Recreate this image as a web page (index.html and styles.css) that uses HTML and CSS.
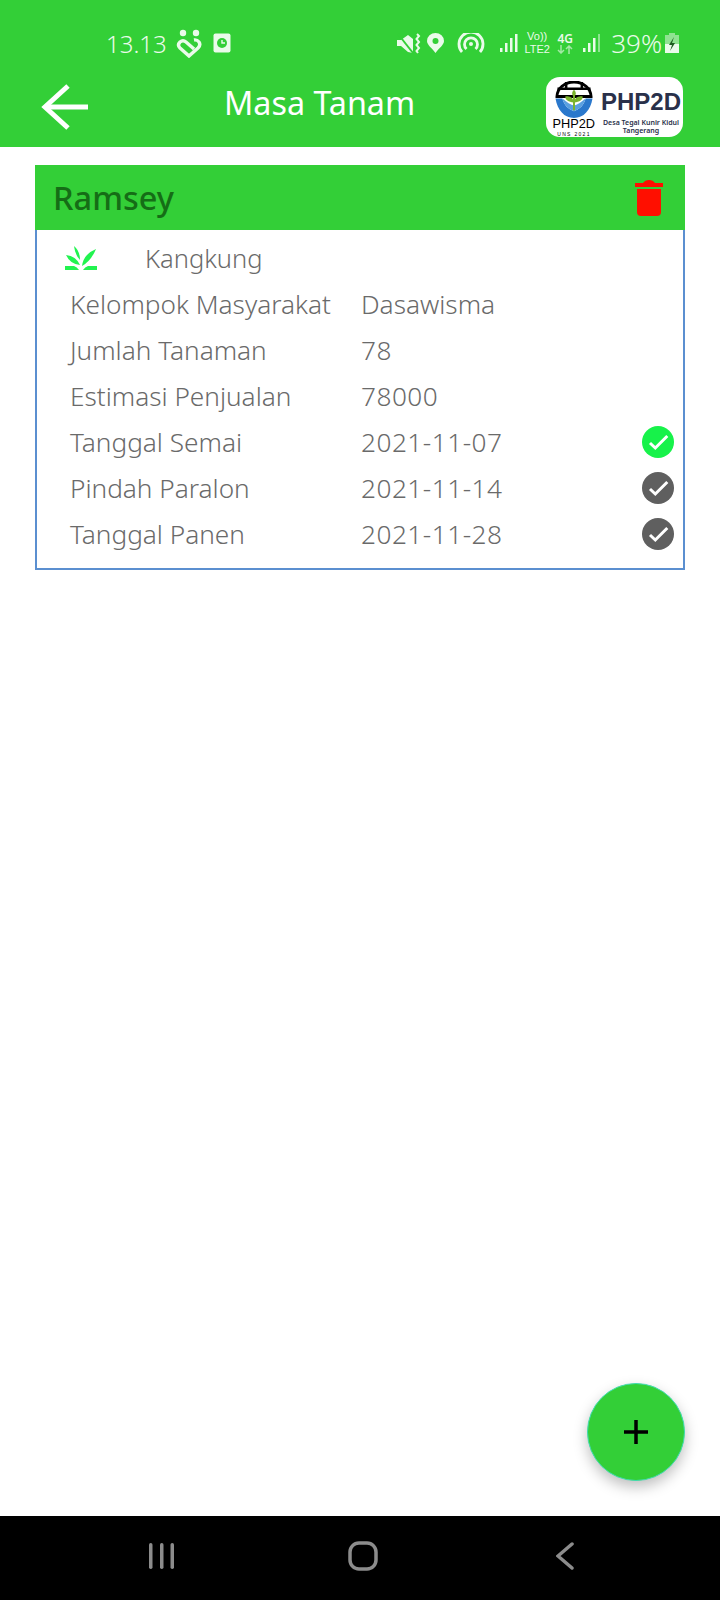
FILE: index.html

```html
<!DOCTYPE html>
<html lang="id">
<head>
  <meta charset="UTF-8" />
  <meta name="viewport" content="width=device-width, initial-scale=1.0"/>
  <title>Masa Tanam</title>
  <link rel="stylesheet" href="styles.css">
</head>
<body>

  <div class="screen">
    <div class="status-bar">
      <span class="clock">13.13</span>
      <svg class="st-people" width="28" height="30" viewBox="0 0 28 30">
        <circle cx="8" cy="5" r="3.200" fill="#eafbea"/><circle cx="21" cy="5" r="3.200" fill="#eafbea"/>
        <g fill="none" stroke="#eafbea" stroke-width="3.400">
          <path d="M19 21 11 14Q8 11.500 5 14Q2 17 5 20L14 28 23 20Q26 17 24 14Q22 11.500 19 12"/>
        </g>
      </svg>
      <svg class="st-clockapp" width="18" height="20" viewBox="0 0 18 20">
        <rect x="0.500" y="0.500" width="17" height="19" rx="2" fill="#eafbea"/>
        <circle cx="9" cy="10" r="5" fill="#33cf37"/>
        <path d="M9 7v3h3" fill="none" stroke="#eafbea" stroke-width="1.400"/>
      </svg>

      <div class="status-right">
        <svg class="st-mute" width="24" height="21" viewBox="0 0 24 21" fill="#eafbea">
          <path d="M0 7h4L11 2 16 6V20L11 19 4 13H0Z"/><path d="M1 1 16 20" stroke="#33cf37" stroke-width="2"/>
          <path d="M20 1 22 3 19.500 6 22 9 19.500 12 22 15 19.500 18 21 20" fill="none" stroke="#eafbea" stroke-width="2"/>
        </svg>
        <svg class="st-pin" width="17" height="20" viewBox="0 0 17 20">
          <path d="M8.500 20 C5 15 0 12 0 8 A8.500 8 0 0 1 17 8 C17 12 12 15 8.500 20Z" fill="#eafbea"/>
          <circle cx="8.500" cy="8" r="3" fill="#33cf37"/>
        </svg>
        <svg class="st-hotspot" width="28" height="20" viewBox="0 0 28 20" fill="none" stroke="#eafbea" stroke-width="2.800">
          <path d="M5 19A12 12 0 1 1 23 19"/><path d="M9.500 16A6.500 6.500 0 1 1 18.500 16"/>
          <circle cx="14" cy="11" r="2" fill="#eafbea" stroke="none"/>
        </svg>
        <svg class="st-signal" width="19" height="18" viewBox="0 0 19 18" fill="#eafbea">
          <rect x="0" y="14" width="2.500" height="4"/><rect x="5" y="9" width="2.500" height="9"/><rect x="10" y="4" width="2.500" height="14"/><rect x="15" y="0" width="2.500" height="18"/>
        </svg>
        <div class="st-lte"><span>Vo))</span><span>LTE2</span></div>
        <div class="st-4g">
          <span>4G</span>
          <svg width="16" height="9" viewBox="0 0 16 9" fill="none" stroke="#a4e9a6" stroke-width="1.500">
            <path d="M4 0V8M1 5 4 8 7 5"/><path d="M12 9V1M9 4 12 1 15 4"/>
          </svg>
        </div>
        <svg class="st-signal2" width="19" height="18" viewBox="0 0 19 18" fill="#eafbea">
          <rect x="0" y="14" width="2.500" height="4"/><rect x="5" y="9" width="2.500" height="9"/><rect x="10" y="4" width="2.500" height="14"/><rect x="15" y="0" width="2" height="18" opacity="0.5"/>
        </svg>
        <span class="st-batt">39%</span>
        <svg class="st-battery" width="14" height="20" viewBox="0 0 14 20">
          <path d="M4 0h6v2h4v18H0V2h4Z" fill="#8fe391"/>
          <rect x="0" y="11" width="14" height="9" fill="#eafbea"/>
          <path d="M9 4 4 12h3l-2 6 5-8H7Z" fill="#1d5c1f"/>
        </svg>
      </div>
    </div>

    <div class="app-bar">
      <svg class="back-arrow" width="48" height="46" viewBox="0 0 48 46" fill="none" stroke="#fff" stroke-width="5">
        <path d="M47 23H4"/><path d="M27 2 4 23 27 44"/>
      </svg>
      <h1>Masa Tanam</h1>
      <div class="logo">
        <div class="logo-mark">
          <svg width="38" height="37" viewBox="0 0 38 38">
            <path d="M1.500 16A17.500 15 0 0 1 36.500 16Z" fill="#fff" stroke="#000" stroke-width="3"/>
            <path d="M2 8H36M11 1V8M27 1V8" stroke="#000" stroke-width="2.500" fill="none"/>
            <path d="M0 18C2 30 9 38 19 38S36 30 38 18H31C29 25 25 29 19 31C13 29 9 25 7 18Z" fill="#2a78cc"/>
            <path d="M7 18C9 25 13 29 19 31C25 29 29 25 31 18C28 20 24 24 20 25H18C14 24 10 20 7 18Z" fill="#5aa0e0"/>
            <path d="M19 30V15" stroke="#7ab32e" stroke-width="2"/>
            <path d="M19 22C13 22 10 19 10 16C15 15 18 17 19 22ZM19 22C25 22 28 19 28 16C23 15 20 17 19 22ZM19 16C16 14 17 11 19 9C21 11 22 14 19 16Z" fill="#7ab32e"/>
          </svg>
          <div class="logo-mark-name">PHP2D</div>
          <div class="logo-mark-year">UNS 2021</div>
        </div>
        <div class="logo-text">
          <div class="logo-name">PHP2D</div>
          <div class="logo-desc">Desa Tegal Kunir Kidul<br>Tangerang</div>
        </div>
      </div>
    </div>

    <div class="content">
      <div class="card">
        <div class="card-head">
          <span class="card-title">Ramsey</span>
          <svg class="trash" width="28" height="36" viewBox="0 0 28 36" fill="#ff0f00">
            <path d="M0 3H8Q10 0 14 0T20 3H28V7H0Z"/>
            <path d="M2 9H26V32Q26 36 22 36H6Q2 36 2 32Z"/>
          </svg>
        </div>
        <div class="card-body">
          <div class="plant-row">
            <svg width="32" height="24" viewBox="0 0 32 24" fill="#22f350">
              <path d="M0 24V20H9Q12 21 14 24Z"/>
              <path d="M32 24V20H23Q20 21 18 24Z"/>
              <path d="M1 9Q11 10 15 19Q5 18 1 9Z"/>
              <path d="M9 0Q15 5 15 14Q10 9 9 0Z"/>
              <path d="M31 3Q26 5 22 9Q18 13 17 20Q26 15 31 3Z"/>
            </svg>
            <span>Kangkung</span>
          </div>
          <div class="row"><span class="lbl">Kelompok Masyarakat</span><span class="val">Dasawisma</span></div>
          <div class="row"><span class="lbl">Jumlah Tanaman</span><span class="val num">78</span></div>
          <div class="row"><span class="lbl">Estimasi Penjualan</span><span class="val num">78000</span></div>
          <div class="row">
            <span class="lbl">Tanggal Semai</span><span class="val num">2021-11-07</span>
            <svg class="check" width="32" height="32" viewBox="0 0 32 32"><circle cx="16" cy="16" r="16" fill="#17f24a"/><path d="M8 17 13.300 22 25.300 10" fill="none" stroke="#fff" stroke-width="3"/></svg>
          </div>
          <div class="row">
            <span class="lbl">Pindah Paralon</span><span class="val num">2021-11-14</span>
            <svg class="check" width="32" height="32" viewBox="0 0 32 32"><circle cx="16" cy="16" r="16" fill="#5f5f5f"/><path d="M8 17 13.300 22 25.300 10" fill="none" stroke="#fff" stroke-width="3"/></svg>
          </div>
          <div class="row">
            <span class="lbl">Tanggal Panen</span><span class="val num">2021-11-28</span>
            <svg class="check" width="32" height="32" viewBox="0 0 32 32"><circle cx="16" cy="16" r="16" fill="#5f5f5f"/><path d="M8 17 13.300 22 25.300 10" fill="none" stroke="#fff" stroke-width="3"/></svg>
          </div>
        </div>
      </div>

      <button class="fab" type="button">
        <svg width="26" height="26" viewBox="0 0 26 26"><path d="M13 1V25M1 13H25" stroke="#000" stroke-width="3.500"/></svg>
      </button>
    </div>

    <div class="nav-bar">
      <svg width="25" height="28" viewBox="0 0 25 28" fill="#8c8c8c">
        <rect x="0" y="1" width="3.500" height="26" rx="1.700"/><rect x="11" y="1" width="3.500" height="26" rx="1.700"/><rect x="21.500" y="1" width="3.500" height="26" rx="1.700"/>
      </svg>
      <svg class="nav-home" width="30" height="30" viewBox="0 0 30 30" fill="none" stroke="#8c8c8c" stroke-width="3.500">
        <rect x="2" y="2" width="26" height="26" rx="9"/>
      </svg>
      <svg class="nav-back" width="18" height="28" viewBox="0 0 18 28" fill="none" stroke="#8c8c8c" stroke-width="3.500" stroke-linecap="round">
        <path d="M16 2 2 14 16 26"/>
      </svg>
    </div>
  </div>

</body>
</html>
```

FILE: styles.css

```css
html, body {
  margin: 0;
  padding: 0;
  background-color: #fff;
  font-family: "Noto Sans", "Open Sans", sans-serif;
}

.screen {
  display: flex;
  flex-direction: column;
  width: 720px;
  height: 1600px;
  overflow: hidden;
}

/* status bar */
.status-bar {
  display: flex;
  align-items: center;
  height: 72px;
  padding: 14px 41px 0 106px;
  box-sizing: border-box;
  background-color: #33cf37;
  color: #eafbea;
}

.clock {
  font-size: 24px;
  font-weight: 300;
}

.st-people {
  margin-left: 8px;
}

.st-clockapp {
  margin-left: 10px;
}

.status-right {
  display: flex;
  align-items: center;
  margin-left: auto;
}

.st-pin { margin-left: 6px; }
.st-hotspot { margin-left: 13px; }
.st-signal { margin-left: 15px; }

.st-lte {
  display: flex;
  flex-direction: column;
  align-items: center;
  width: 28px;
  margin-left: 4px;
  font-family: "Liberation Sans", sans-serif;
  font-size: 11px;
  line-height: 13px;
  white-space: nowrap;
}

.st-4g {
  display: flex;
  flex-direction: column;
  align-items: center;
  width: 18px;
  margin-left: 5px;
  font-size: 12px;
  font-weight: 600;
  line-height: 12px;
}

.st-signal2 { margin-left: 9px; }

.st-batt {
  margin-left: 9px;
  font-size: 26px;
  font-weight: 300;
}

.st-battery { margin-left: 3px; }

/* app bar */
.app-bar {
  display: flex;
  align-items: center;
  height: 75px;
  padding: 0 37px 0 41px;
  box-sizing: border-box;
  background-color: #33cf37;
}

.back-arrow {
  margin-bottom: 6px;
}

.app-bar h1 {
  margin: 0 0 16px 135px;
  font-size: 32.300px;
  font-weight: 400;
  color: #fff;
}

.logo {
  display: flex;
  width: 137px;
  height: 60px;
  margin: 0 0 5px auto;
  padding: 4px 3px 0 9px;
  box-sizing: border-box;
  background-color: #fff;
  border-radius: 14px;
  overflow: hidden;
}

.logo-mark {
  display: flex;
  flex-direction: column;
  align-items: center;
  width: 38px;
  color: #000;
}

.logo-mark-name {
  margin-top: -1px;
  font-family: "Liberation Sans", sans-serif;
  font-size: 13px;
  line-height: 13px;
  transform: scaleX(0.98);
}

.logo-mark-year {
  margin-top: 1px;
  font-family: "Liberation Sans", sans-serif;
  font-size: 5px;
  line-height: 6px;
  letter-spacing: 1.300px;
  white-space: nowrap;
}

.logo-text {
  flex: 1;
  margin-left: 8px;
  text-align: center;
}

.logo-name {
  margin-top: 9px;
  font-family: "Liberation Sans", sans-serif;
  font-size: 24px;
  font-weight: 700;
  line-height: 24px;
  color: #29304a;
}

.logo-desc {
  margin-top: 5px;
  font-size: 7px;
  font-weight: 600;
  line-height: 8px;
  color: #29304a;
  white-space: nowrap;
}

/* content */
.content {
  flex: 1;
  position: relative;
  padding: 18px 35px 0;
}

.card-head {
  display: flex;
  justify-content: space-between;
  align-items: center;
  height: 65px;
  padding: 0 22px 0 18px;
  background-color: #33cf37;
}

.card-title {
  font-size: 32.500px;
  font-weight: 500;
  color: #156d16;
}

.card-body {
  height: 333px;
  padding-top: 5px;
  border: 2px solid #5b8fd0;
  border-top: none;
}

.plant-row {
  display: flex;
  align-items: center;
  height: 46px;
  margin-left: 28px;
  font-size: 25.500px;
  font-weight: 300;
  color: #6a6a6a;
}

.plant-row span {
  margin-left: 48px;
}

.row {
  display: flex;
  align-items: center;
  height: 46px;
  padding: 0 9px 0 33px;
  font-size: 26.200px;
  font-weight: 300;
  color: #6a6a6a;
}

.lbl {
  width: 291px;
  white-space: nowrap;
}

.val {
  flex: 1;
}

.num {
  letter-spacing: 0.500px;
}

.fab {
  position: absolute;
  right: 35px;
  bottom: 35px;
  display: flex;
  align-items: center;
  justify-content: center;
  width: 98px;
  height: 98px;
  padding: 0;
  background-color: #33cf37;
  border: 1px solid #3fdcb0;
  border-radius: 50%;
  box-shadow: 0 6px 14px rgba(0,0,0,0.25);
}

/* nav bar */
.nav-bar {
  display: flex;
  align-items: center;
  height: 84px;
  padding: 0 0 4px 149px;
  box-sizing: border-box;
  background-color: #000;
}

.nav-home {
  margin-left: 174px;
}

.nav-back {
  margin-left: 178px;
}
```
